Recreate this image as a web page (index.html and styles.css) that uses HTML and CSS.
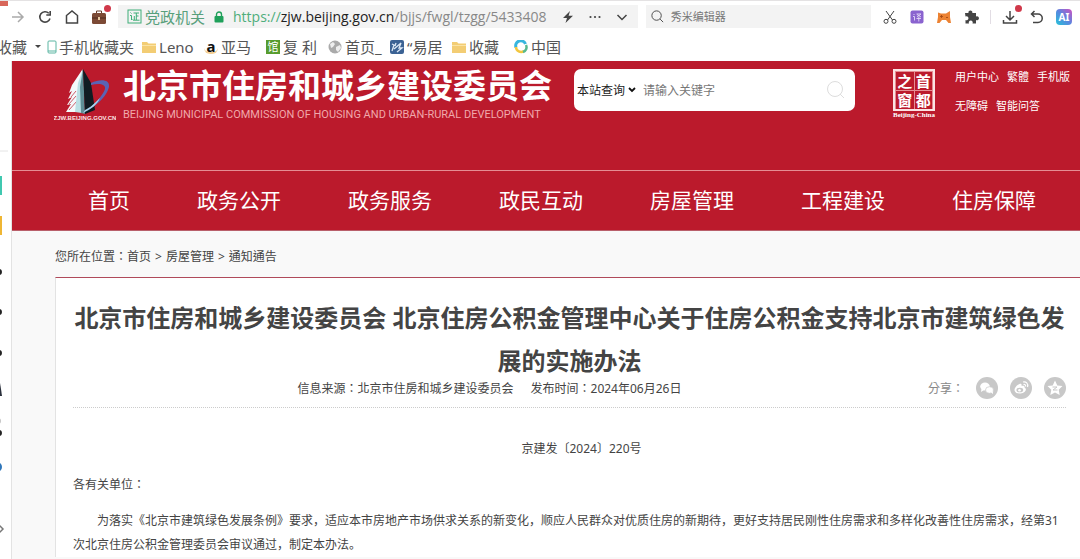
FILE: index.html
```html
<!DOCTYPE html>
<html lang="zh-CN">
<head>
  <meta charset="UTF-8">
  <title>北京市住房和城乡建设委员会</title>
  <link rel="stylesheet" href="styles.css">
</head>
<body>

  <div class="toolbar">
    <span class="tab-tag"></span>
    <button class="tool" aria-label="前进"><svg viewBox="0 0 16 16"><path d="M2 8h11M8 3l5 5-5 5" stroke="#aaa" stroke-width="1.500"/></svg></button>
    <button class="tool" aria-label="刷新"><svg viewBox="0 0 16 16"><path d="M13 9.500a5.200 5.200 0 1 1-1.200-5.200M13.200 2v4H9.300" stroke-width="1.600"/></svg></button>
    <button class="tool" aria-label="主页"><svg viewBox="0 0 16 16"><path d="M2.500 6.500L8 2l5.500 4.500V14h-11z" stroke-width="1.500"/></svg></button>
    <button class="tool" aria-label="工具箱"><svg viewBox="0 0 16 16"><rect x="1" y="4" width="14" height="11" rx="1.500" fill="#7c4a35" stroke="none"/><path d="M5.500 4V2h5v2" stroke="#6a3c2a"/><path d="M1 9h14" stroke="#4e2a1e"/><rect x="7" y="8" width="2" height="3" fill="#e8c9a0" stroke="none"/></svg><i class="dot"></i></button>

    <div class="address">
      <svg class="cert" viewBox="0 0 15 15"><rect x="1" y="1" width="13" height="13" stroke="#3fae78"/><path d="M3.500 3.500l1 1M3 6.500h1.500V11l1-1M6.500 4h5.500M9.300 4v7M9.300 7h2.200M7.300 7v4M6 11.200h6.500" stroke="#3fae78"/></svg>
      <span class="cert-text">党政机关</span>
      <svg class="lock" viewBox="0 0 10 12"><path d="M2.500 6V3.500a2.500 2.500 0 0 1 5 0V6" stroke="#1fa05a" stroke-width="1.400"/><rect x="0.500" y="5" width="9" height="6.500" rx="1" fill="#1fa05a" stroke="none"/></svg>
      <span class="url"><span class="scheme">https://</span><b>zjw.beijing.gov.cn</b>/bjjs/fwgl/tzgg/5433408</span>
      <button class="tool" aria-label="极速模式"><svg viewBox="0 0 16 16"><path d="M10 2L3 9h4l-1.500 5L13 6.800H8.600z" fill="#444" stroke="none"/></svg></button>
      <button class="tool" aria-label="更多"><svg viewBox="0 0 16 16"><g fill="#444" stroke="none"><circle cx="3.500" cy="8" r="1.100"/><circle cx="8" cy="8" r="1.100"/><circle cx="12.500" cy="8" r="1.100"/></g></svg></button>
      <button class="tool" aria-label="展开"><svg viewBox="0 0 16 16"><path d="M3.500 6L8 10.500 12.500 6" stroke-width="1.500"/></svg></button>
    </div>

    <label class="quick-search">
      <svg viewBox="0 0 16 16"><circle cx="7" cy="7" r="5"/><path d="M10.800 10.800L14 14"/></svg>
      <input type="text" aria-label="搜索" placeholder="秀米编辑器">
    </label>

    <button class="tool" aria-label="截图"><svg viewBox="0 0 16 16"><path d="M4 2l6.500 9M12 2l-6.500 9"/><circle cx="4" cy="12.300" r="2"/><circle cx="12" cy="12.300" r="2"/></svg></button>
    <button class="tool" aria-label="翻译"><svg viewBox="0 0 16 16"><rect x="1.500" y="1.500" width="13" height="13" rx="2" fill="#8a63cf" stroke="none"/><path d="M4.500 5l1 1M4 7.500h1.500v4M7.500 5H12L8 8M8 5.500l4 2.500M7.500 9.500H12M9.800 8v4.500" stroke="#e4d8f7" stroke-width=".9"/></svg></button>
    <button class="tool" aria-label="游戏"><svg viewBox="0 0 16 16"><path d="M2 3.500l3 1h5L14 2v6l1 6h-2.500L10 11H6l-2.500 3H1l1-6z" fill="#ec8232" stroke="none"/><path d="M4 7.500h3M5.500 6v3M10 8.500h2" stroke="#a64b12" stroke-width=".9"/></svg></button>
    <button class="tool" aria-label="扩展"><svg viewBox="0 0 16 16"><path d="M2 4h3.500a2 2 0 1 1 3.800 0H13v3.500a2 2 0 1 1 0 3.500v3.500H9.500a2 2 0 1 0-3.500 0H2.500V11a2 2 0 1 0 0-3.500z" fill="#444" stroke="none"/></svg></button>
    <span class="divider"></span>
    <button class="tool" aria-label="下载"><svg viewBox="0 0 16 16"><path d="M8 2v9M4 7l4 4 4-4M1.500 11v3h13v-3" stroke-width="1.500"/></svg><i class="dot"></i></button>
    <button class="tool" aria-label="撤销"><svg viewBox="0 0 16 16"><path d="M5.500 2L2.500 5l3 3M2.500 5H9a4.200 4.200 0 0 1 0 8.500H4" stroke-width="1.500"/></svg></button>
    <button class="tool ai" aria-label="AI">AI</button>
  </div>

  <nav class="bookmarks">
    <a class="fav" href="#">收藏<i class="caret"></i></a>
    <a class="phone" href="#"><svg viewBox="0 0 10 14"><rect x="1" y="1" width="8" height="12" rx="1" stroke="#5bb5a2"/><path d="M1 11h8" stroke="#5bb5a2"/></svg>手机收藏夹</a>
    <a href="#"><svg viewBox="0 0 14 14"><path d="M0 2h5l1.500 1.500H14V13H0z" fill="#f3cd74" stroke="none"/><path d="M0 5.500h14" stroke="#fae3a5"/></svg>Leno</a>
    <a href="#"><span class="amazon">a</span>亚马</a>
    <a href="#"><span class="tile green">馆</span>复 利</a>
    <a href="#"><svg viewBox="0 0 14 14"><circle cx="7" cy="7" r="6.500" fill="#aaa" stroke="none"/><path d="M2 4l3-2 2 2-2 3-2 1zM8 7l4-2 1 3-3 4-2-2z" fill="#eee" stroke="none"/></svg>首页_</a>
    <a href="#"><svg viewBox="0 0 14 14"><rect width="14" height="14" rx="2" fill="#3b6294" stroke="none"/><path d="M2 4l2 1-2 6M4 9l7-6-2 5h3l-5 4M6 3l-1 3" stroke="#dce8f5" stroke-width="1.300"/></svg>“易居</a>
    <a href="#"><svg viewBox="0 0 14 14"><path d="M0 2h5l1.500 1.500H14V13H0z" fill="#f3cd74" stroke="none"/><path d="M0 5.500h14" stroke="#fae3a5"/></svg>收藏</a>
    <a href="#"><svg viewBox="0 0 14 14"><path d="M11.500 4A5 5 0 0 0 2 7.500" stroke="#37b6df" stroke-width="3"/><path d="M2 7a5 5 0 0 0 8 4" stroke="#f2c63f" stroke-width="2.500"/><path d="M12 5a5 5 0 0 1-3 7" stroke="#57b98d" stroke-width="2.500"/></svg>中国</a>
  </nav>

  <div class="window">
    <aside class="side">
      <svg viewBox="0 0 11 498" preserveAspectRatio="xMinYMin">
        <path d="M0 90h8" stroke="#e4e4e4"/>
        <g stroke="none">
          <path d="M0 115h2v19H0z" fill="#40c8b0"/>
          <path d="M0 155h2v19H0z" fill="#efb634"/>
          <circle cx="-1" cy="211" r="3" fill="#222"/>
          <circle cx="-1" cy="251" r="3" fill="#222"/>
          <circle cx="-1" cy="292" r="3" fill="#222"/>
          <path d="M0 322l1 6 1 7H0z" fill="#2b303c"/>
          <circle cx="-2" cy="360" r="3" fill="#c4c4c4"/>
          <circle cx="-1" cy="372" r="3" fill="#222"/>
          <circle cx="-3" cy="406" r="5" fill="#2f76ba"/>
        </g>
        <path d="M-1 464l4 4-4 4" stroke="#777" stroke-width="1.500"/>
      </svg>
    </aside>

    <div class="page">
      <header class="header">
        <svg class="logo" viewBox="0 0 62 54">
          <path d="M28 1L18 16l-3 8 3-2-4 8 4-2-5 8 4-1-5 8h16z" fill="#f4f9fb"/>
          <path d="M17 28l5-6M15 35l7-8M15 41l8-9" stroke="#bb1a2c" stroke-width=".7"/>
          <path d="M29 0l-5 14-3 29 7 1z" fill="#b9e0e4"/>
          <path d="M29 0l-3 18 1 26 4 1z" fill="#5f8f96"/>
          <path d="M29 0l8 14 4 27-10 4z" fill="#101c22"/>
          <path d="M37 14c9-4 19-4 18 4-2 8-9 16-22 24 8-7 16-16 18-22 1-5-6-6-14-4z" fill="#5a63b4"/>
          <path d="M31 41c5-2 11-8 15-12-3 7-9 11-17 15z" fill="#a9d4ec"/>
          <text x="31" y="51">ZJW.BEIJING.GOV.CN</text>
        </svg>
        <div class="brand">
          <h1>北京市住房和城乡建设委员会</h1>
          <p>BEIJING MUNICIPAL COMMISSION OF HOUSING AND URBAN-RURAL DEVELOPMENT</p>
        </div>
        <form class="site-search">
          <select aria-label="查询范围"><option>本站查询</option></select>
          <svg class="arrow" viewBox="0 0 8 8"><path d="M1 2l3 3 3-3" stroke="#111" stroke-width="1.800"/></svg>
          <input type="text" aria-label="关键字" placeholder="请输入关键字">
          <button type="button" aria-label="搜索"><svg viewBox="0 0 20 20"><circle cx="9" cy="9" r="7.500" stroke="#ddd"/><path d="M14 14l4 4" stroke="#ddd"/></svg></button>
        </form>
        <div class="capital">
          <div class="seal"><span>之</span><span>首</span><span>窗</span><span>都</span></div>
          <small>Beijing-China</small>
        </div>
        <div class="user-links">
          <a href="#">用户中心</a><a href="#">繁體</a><a href="#">手机版</a>
          <a href="#">无障碍</a><a href="#">智能问答</a>
        </div>
      </header>

      <nav class="main-nav">
        <a href="#">首页</a>
        <a href="#">政务公开</a>
        <a href="#">政务服务</a>
        <a href="#">政民互动</a>
        <a href="#">房屋管理</a>
        <a href="#">工程建设</a>
        <a href="#">住房保障</a>
      </nav>

      <div class="crumbs">
        <span>您所在位置：</span><a href="#">首页</a><i>&gt;</i><a href="#">房屋管理</a><i>&gt;</i><a href="#">通知通告</a>
      </div>

      <article class="article">
        <h2>北京市住房和城乡建设委员会 北京住房公积金管理中心关于住房公积金支持北京市建筑绿色发展的实施办法</h2>
        <div class="info">
          <div class="meta"><span>信息来源：北京市住房和城乡建设委员会</span><span>发布时间：2024年06月26日</span></div>
          <div class="share">
            <span>分享：</span>
            <a href="#" aria-label="微信"><svg viewBox="0 0 22 22"><circle cx="11" cy="11" r="11" fill="#c8c8c8"/><ellipse cx="9" cy="9.500" rx="4.800" ry="4" fill="#fff"/><path d="M5.500 12l-.5 3 3-2z" fill="#fff"/><ellipse cx="13.500" cy="13" rx="4" ry="3.300" fill="#fff" stroke="#c8c8c8" stroke-width=".7"/><path d="M15 15.500l2 1.500-.2-3z" fill="#fff"/></svg></a>
            <a href="#" aria-label="微博"><svg viewBox="0 0 22 22"><circle cx="11" cy="11" r="11" fill="#c8c8c8"/><path d="M9.500 7c1.500-.5 2.500.2 2 2 2-.6 3.500 0 3 1.500 3 1.500 1 5.500-4 6-4 .3-6-1.500-6-3.500 0-2.200 2.500-5 5-6z" fill="#fff"/><ellipse cx="9.800" cy="13" rx="3.400" ry="2.300" fill="#c8c8c8"/><circle cx="9.500" cy="13.200" r="1.300" fill="#fff"/><path d="M13 5c3-.8 5.500 1.500 4.500 5M13.500 7.500c1.500-.3 2.500.6 2 2" stroke="#fff" fill="none" stroke-width="1.200"/></svg></a>
            <a href="#" aria-label="QQ空间"><svg viewBox="0 0 22 22"><circle cx="11" cy="11" r="11" fill="#c8c8c8"/><path d="M11 3.500l2.300 4.900 5.200.7-3.800 3.700 1 5.200-4.700-2.600L6.300 18l1-5.200-3.800-3.700 5.200-.7z" fill="#fff"/><path d="M8.500 10h4.500l-4 3h4.500" stroke="#c8c8c8" fill="none"/></svg></a>
          </div>
        </div>
        <div class="content">
          <p class="number">京建发〔2024〕220号</p>
          <p class="to">各有关单位：</p>
          <p>为落实《北京市建筑绿色发展条例》要求，适应本市房地产市场供求关系的新变化，顺应人民群众对优质住房的新期待，更好支持居民刚性住房需求和多样化改善性住房需求，经第31次北京住房公积金管理委员会审议通过，制定本办法。</p>
        </div>
      </article>
    </div>
  </div>

</body>
</html>
```

FILE: styles.css
```css
* {
  margin: 0;
  padding: 0;
  box-sizing: border-box;
}

body {
  font-family: "Noto Sans", "Noto Sans CJK SC", sans-serif;
  font-size: 12px;
  color: #444;
  background: #fff;
  min-height: 100vh;
  display: flex;
  flex-direction: column;
}

a {
  color: inherit;
  text-decoration: none;
}

button,
input,
select {
  font: inherit;
  color: inherit;
  background: none;
  border: none;
  outline: none;
}

svg {
  display: block;
  flex-shrink: 0;
}

/* browser bar */
.toolbar {
  position: relative;
  display: flex;
  align-items: center;
  gap: 11px;
  height: 32px;
  padding: 0 8px 0 10px;
  border-top: 1px solid #e4e2e3;
}

.tab-tag {
  position: absolute;
  left: 0;
  top: 0;
  width: 8px;
  height: 5px;
  background: #d8665a;
}

.tool {
  position: relative;
  flex-shrink: 0;
  width: 16px;
  height: 16px;
}

.toolbar svg,
.bookmarks svg,
.side svg,
.site-search svg {
  fill: none;
  stroke: #444;
}

.tool .dot {
  position: absolute;
  right: -4px;
  top: -4px;
  width: 7px;
  height: 7px;
  border-radius: 50%;
  background: #d0384a;
}

.tool.ai {
  border-radius: 4px;
  background: linear-gradient(45deg, #25c3d8, #5a86e0, #d04fc0);
  color: #fff;
  font-size: 10px;
  line-height: 16px;
  font-weight: bold;
}

.address {
  flex: 518 1 0;
  min-width: 0;
  height: 23px;
  display: flex;
  align-items: center;
  gap: 9px;
  padding: 0 8px 0 9px;
  background: #f3f3f3;
}

.address .tool {
  margin-left: 2px;
}

.cert {
  width: 15px;
  height: 15px;
}

.cert-text {
  margin-left: -6px;
  font-size: 15px;
  color: #58a07c;
  white-space: nowrap;
}

.lock {
  width: 10px;
  height: 12px;
}

.url {
  flex: 1;
  min-width: 0;
  overflow: hidden;
  white-space: nowrap;
  font-family: "Open Sans", sans-serif;
  font-size: 14px;
  color: #888;
}

.url b {
  font-weight: normal;
  color: #222;
}

.url .scheme {
  color: #4fae7c;
}

.quick-search {
  flex: 224 1 0;
  min-width: 0;
  height: 23px;
  margin-left: -3px;
  display: flex;
  align-items: center;
  gap: 6px;
  padding: 0 4px;
  background: #f3f3f3;
}

.quick-search svg {
  width: 15px;
  height: 15px;
}

.quick-search input {
  flex: 1;
  min-width: 0;
  font-size: 11px;
}

::placeholder {
  color: #777;
  opacity: 1;
}

.divider {
  width: 1px;
  height: 14px;
  background: #e2dde4;
}

.bookmarks {
  display: flex;
  align-items: center;
  gap: 10px;
  height: 29px;
  font-size: 15px;
  line-height: 24px;
  color: #555;
  overflow: hidden;
}

.bookmarks a {
  display: flex;
  align-items: center;
  gap: 3px;
  width: 52px;
  white-space: nowrap;
}

.bookmarks svg {
  width: 14px;
  height: 14px;
}

.bookmarks .fav {
  width: auto;
  gap: 8px;
  margin-left: -3px;
}

.caret {
  border: 3px solid transparent;
  border-top-color: #444;
  border-bottom: 0;
}

.bookmarks .phone {
  width: auto;
  gap: 2px;
  margin: 0 -2px 0 -4px;
}

.bookmarks .phone svg {
  width: 10px;
}

.amazon {
  width: 14px;
  flex-shrink: 0;
  line-height: 12px;
  text-align: center;
  font-weight: bold;
  color: #111;
  border-bottom: 2px solid #f3cf94;
  border-radius: 0 0 6px 6px;
}

.tile {
  width: 14px;
  flex-shrink: 0;
  line-height: 14px;
  text-align: center;
  font-size: 11px;
  color: #fff;
}

.tile.green {
  background: #579c2e;
}

/* window */
.window {
  flex: 1;
  display: flex;
}

.side {
  width: 12px;
  border-right: 1px solid #e3e3e3;
  overflow: hidden;
}

.side svg {
  width: 11px;
}

.page {
  flex: 1;
  min-width: 0;
  background: #f9f9f9;
}

.header {
  display: flex;
  align-items: flex-start;
  min-height: 109px;
  padding: 8px 0 0 42px;
  background: #bb1a2c;
  color: #fff;
}

.logo {
  width: 62px;
  height: 54px;
}

.logo text {
  font: bold 6px "Liberation Sans", sans-serif;
  fill: #fbe3e3;
  text-anchor: middle;
}

.brand {
  width: 428px;
  margin-left: 7px;
  white-space: nowrap;
}

.brand h1 {
  font-size: 33px;
  line-height: 33px;
}

.brand p {
  margin-top: 7px;
  font-family: Roboto, sans-serif;
  font-size: 11px;
  line-height: 12px;
  color: #f0a8ab;
}

.site-search {
  flex: 0 1 281px;
  min-width: 0;
  height: 42px;
  margin-left: 23px;
  display: flex;
  align-items: center;
  padding: 0 9px 0 3px;
  background: #fff;
  border-radius: 7px;
  color: #222;
}

.site-search select {
  appearance: none;
}

.site-search .arrow {
  width: 8px;
  height: 8px;
  margin: 0 7px 0 2px;
}

.site-search input {
  flex: 1;
  min-width: 0;
}

.site-search button,
.site-search button svg {
  width: 20px;
  height: 20px;
}

.capital {
  margin-left: 38px;
  text-align: center;
  font-family: "Liberation Serif", serif;
}

.seal {
  width: 42px;
  height: 42px;
  margin: 0 auto;
  display: grid;
  grid-template-columns: 1fr 1fr;
  gap: 1px;
  padding: 1px;
  border: 2px solid #fbe3e3;
  font: bold 15px/18px "Noto Sans CJK SC", sans-serif;
  background: #e58d93;
}

.seal span {
  height: 18px;
  background: #bb1a2c;
}

.capital small {
  display: block;
  font-size: 7px;
  line-height: 8px;
  font-weight: bold;
}

.user-links {
  flex: 1;
  display: flex;
  flex-wrap: wrap;
  gap: 13px 8px;
  margin-left: 20px;
  font-size: 11px;
  line-height: 16px;
  white-space: nowrap;
}

.main-nav {
  display: flex;
  justify-content: space-between;
  padding: 0 44px 0 76px;
  background: #bb1a2c;
  border-top: 1px solid #e58d93;
  border-bottom: 1px solid #b9606b;
  color: #fff;
  font-size: 21px;
  line-height: 59px;
}

.crumbs {
  display: flex;
  margin-left: 43px;
  padding: 14px 0 8px;
  line-height: 24px;
}

.crumbs i {
  margin: 0 4px;
  font-style: normal;
}

/* these fonts keep the full-width colon centred */
.crumbs,
.meta,
.share,
.content .to {
  font-family: "Noto Sans", "Noto Sans CJK TC", sans-serif;
  font-feature-settings: "locl" 0;
}

.article {
  margin-left: 43px;
  padding: 18px 14px 0 17px;
  background: #fff;
  border-top: 1px solid #b04a5a;
  border-left: 1px solid #e3e3e3;
}

.article h2 {
  text-align: center;
  font-size: 24px;
  line-height: 43px;
}

.info {
  display: flex;
  align-items: center;
  padding-bottom: 13px;
  box-sizing: content-box;
  height: 12px;
  border-bottom: 1px dotted #ccc;
}

.meta {
  flex: 1;
  display: flex;
  justify-content: center;
  gap: 17px;
}

.share {
  display: flex;
  align-items: center;
  gap: 12px;
  padding-left: 22px;
  color: #888;
}

.share svg {
  width: 22px;
  height: 22px;
}

.content {
  padding-top: 29px;
  line-height: 24px;
}

.content p {
  text-indent: 24px;
  margin-bottom: 12px;
}

.content p:last-child {
  margin-bottom: 0;
}

.content .number {
  text-align: center;
}

.content .to {
  text-indent: 0;
}
```
